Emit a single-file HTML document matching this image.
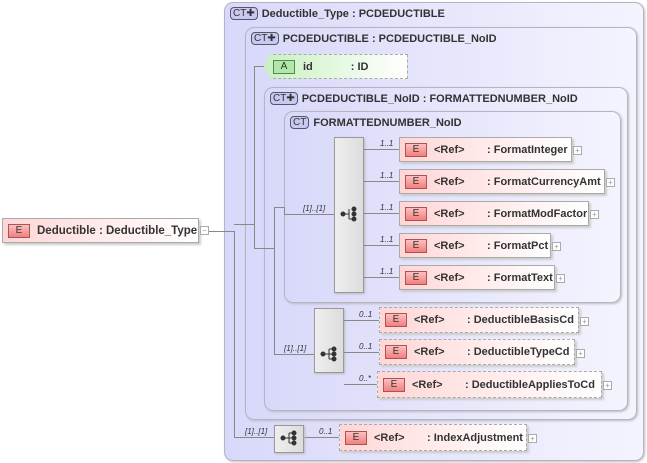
<!DOCTYPE html>
<html><head><meta charset="utf-8"><style>
*{margin:0;padding:0;box-sizing:border-box}
body{width:647px;height:463px;background:#fff;position:relative;overflow:hidden;font-family:"Liberation Sans",sans-serif;font-size:11px;color:#333;font-weight:bold}
.ct{position:absolute;border:1px solid #b4b4c4;border-radius:9px;background:linear-gradient(90deg,#d8d8fa,#f4f4fe);box-shadow:1px 1px 2px #bbb}
.hd{position:absolute;left:5px;top:4px;white-space:nowrap;line-height:14px}
.tag{display:inline-block;border:1px solid #556;border-radius:4px;background:#c8c8f0;font-size:10px;font-weight:normal;padding:0 2px;line-height:11px;margin-right:4px;vertical-align:1px}
.el{position:absolute;height:25px;border:1px solid #aaa;background:linear-gradient(90deg,#ffd6d6,#fff);box-shadow:2px 2px 2px #ccc;white-space:nowrap;padding-left:5px;display:flex;align-items:center}
.el.d{border:1px dashed #aaa}
.E{display:inline-block;flex:none;width:22px;height:14px;border:1px solid #a55;background:linear-gradient(#ffc0c0,#f08080);font-size:10px;font-weight:normal;text-align:center;line-height:12px;margin-right:7px;color:#333}
.r{display:inline-block;width:53px}
.pl{position:absolute;width:9px;height:9px;border:1px solid #aaa;background:#fff;font-size:8px;line-height:7px;text-align:center;color:#999;font-weight:normal}
.seq{position:absolute;border:1px solid #999;background:linear-gradient(90deg,#eee,#ddd);box-shadow:1px 1px 2px #bbb}
.h{position:absolute;height:1px;background:#888}
.v{position:absolute;width:1px;background:#888}
.m{position:absolute;font-size:8px;font-style:italic;font-weight:normal;color:#333}
</style></head><body>

<div class="ct" style="left:224px;top:2px;width:420px;height:459px"><div class="hd"><span class="tag">CT✚</span>Deductible_Type : PCDEDUCTIBLE</div></div>
<div class="ct" style="left:245px;top:27px;width:392px;height:393px"><div class="hd"><span class="tag">CT✚</span>PCDEDUCTIBLE : PCDEDUCTIBLE_NoID</div></div>
<div class="ct" style="left:264px;top:87px;width:364px;height:324px"><div class="hd"><span class="tag">CT✚</span>PCDEDUCTIBLE_NoID : FORMATTEDNUMBER_NoID</div></div>
<div class="ct" style="left:284px;top:111px;width:337px;height:192px"><div class="hd"><span class="tag">CT</span>FORMATTEDNUMBER_NoID</div></div>

<div style="position:absolute;left:263px;top:54px;width:145px;height:25px;border:1px dashed #aaa;border-left:none;background:linear-gradient(90deg,#c8f0c0,#fff);padding-left:10px;display:flex;align-items:center;white-space:nowrap;clip-path:polygon(8px 0,100% 0,100% 100%,8px 100%,0 50%)"><span style="display:inline-block;width:22px;height:14px;border:1px solid #585;background:#b0e8a8;font-size:10px;font-weight:normal;text-align:center;line-height:12px;margin-right:8px">A</span>id<span style="margin-left:38px">: ID</span></div>

<!-- lines -->
<div class="h" style="left:208px;top:231px;width:26px"></div>
<div class="v" style="left:234px;top:231px;height:207px"></div>
<div class="h" style="left:234px;top:437px;width:40px"></div>
<div class="h" style="left:234px;top:224px;width:20px"></div>
<div class="v" style="left:254px;top:66px;height:183px"></div>
<div class="h" style="left:254px;top:66px;width:10px"></div>
<div class="h" style="left:254px;top:248px;width:20px"></div>
<div class="v" style="left:274px;top:207px;height:148px"></div>
<div class="h" style="left:274px;top:207px;width:10px"></div>
<div class="h" style="left:284px;top:214px;width:50px"></div>
<div class="v" style="left:284px;top:207px;height:8px"></div>
<div class="h" style="left:274px;top:354px;width:40px"></div>
<div class="h" style="left:303px;top:437px;width:36px"></div>
<div class="m" style="left:303px;top:204px">[1]..[1]</div>
<div class="m" style="left:284px;top:344px">[1]..[1]</div>
<div class="m" style="left:245px;top:427px">[1]..[1]</div>

<div class="seq" style="left:334px;top:137px;width:30px;height:156px"></div>
<div class="seq" style="left:314px;top:308px;width:30px;height:65px"></div>
<div class="seq" style="left:274px;top:425px;width:30px;height:28px"></div>
<svg style="position:absolute;left:340px;top:206px" width="18" height="16"><g fill="#333" stroke="#333"><circle cx="3" cy="8" r="2"/><line x1="3" y1="8" x2="9" y2="8"/><line x1="9" y1="3" x2="9" y2="13"/><line x1="9" y1="13" x2="14" y2="13"/><circle cx="14" cy="3" r="2"/><circle cx="14" cy="8" r="2"/><circle cx="14" cy="13" r="2"/></g></svg>
<svg style="position:absolute;left:320px;top:346px" width="18" height="16"><g fill="#333" stroke="#333"><circle cx="3" cy="8" r="2"/><line x1="3" y1="8" x2="14" y2="8"/><line x1="9" y1="3" x2="9" y2="13"/><line x1="9" y1="3" x2="14" y2="3"/><line x1="9" y1="13" x2="14" y2="13"/><circle cx="14" cy="3" r="2"/><circle cx="14" cy="8" r="2"/><circle cx="14" cy="13" r="2"/></g></svg>
<svg style="position:absolute;left:280px;top:430px" width="18" height="16"><g fill="#333" stroke="#333"><circle cx="3" cy="8" r="2"/><line x1="3" y1="8" x2="14" y2="8"/><line x1="9" y1="3" x2="9" y2="13"/><line x1="9" y1="3" x2="14" y2="3"/><line x1="9" y1="13" x2="14" y2="13"/><circle cx="14" cy="3" r="2"/><circle cx="14" cy="8" r="2"/><circle cx="14" cy="13" r="2"/></g></svg>

<!-- seq1 children -->
<div class="h" style="left:364px;top:149px;width:35px"></div><div class="m" style="left:380px;top:139px">1..1</div>
<div class="h" style="left:364px;top:181px;width:35px"></div><div class="m" style="left:380px;top:171px">1..1</div>
<div class="h" style="left:364px;top:213px;width:35px"></div><div class="m" style="left:380px;top:203px">1..1</div>
<div class="h" style="left:364px;top:245px;width:35px"></div><div class="m" style="left:380px;top:235px">1..1</div>
<div class="h" style="left:364px;top:277px;width:35px"></div><div class="m" style="left:380px;top:267px">1..1</div>
<div class="el" style="left:399px;top:137px;width:173px"><span class="E">E</span><span class="r">&lt;Ref&gt;</span>: FormatInteger</div><div class="pl" style="left:573px;top:146px">+</div>
<div class="el" style="left:399px;top:169px;width:206px"><span class="E">E</span><span class="r">&lt;Ref&gt;</span>: FormatCurrencyAmt</div><div class="pl" style="left:606px;top:178px">+</div>
<div class="el" style="left:399px;top:201px;width:190px"><span class="E">E</span><span class="r">&lt;Ref&gt;</span>: FormatModFactor</div><div class="pl" style="left:590px;top:210px">+</div>
<div class="el" style="left:399px;top:233px;width:152px"><span class="E">E</span><span class="r">&lt;Ref&gt;</span>: FormatPct</div><div class="pl" style="left:552px;top:242px">+</div>
<div class="el" style="left:399px;top:265px;width:156px"><span class="E">E</span><span class="r">&lt;Ref&gt;</span>: FormatText</div><div class="pl" style="left:556px;top:274px">+</div>

<!-- seq2 children -->
<div class="h" style="left:344px;top:320px;width:35px"></div><div class="m" style="left:359px;top:310px">0..1</div>
<div class="h" style="left:344px;top:352px;width:35px"></div><div class="m" style="left:359px;top:342px">0..1</div>
<div class="h" style="left:344px;top:384px;width:33px"></div><div class="m" style="left:359px;top:374px">0..*</div>
<div class="el d" style="left:379px;top:307px;width:200px;height:26px"><span class="E">E</span><span class="r">&lt;Ref&gt;</span>: DeductibleBasisCd</div><div class="pl" style="left:580px;top:317px">+</div>
<div class="el d" style="left:379px;top:339px;width:196px;height:26px"><span class="E">E</span><span class="r">&lt;Ref&gt;</span>: DeductibleTypeCd</div><div class="pl" style="left:576px;top:349px">+</div>
<div class="el d" style="left:377px;top:371px;width:225px;height:27px"><span class="E">E</span><span class="r">&lt;Ref&gt;</span>: DeductibleAppliesToCd</div><div class="pl" style="left:603px;top:381px">+</div>

<div class="m" style="left:319px;top:427px">0..1</div>
<div class="el d" style="left:339px;top:424px;width:188px;height:27px"><span class="E">E</span><span class="r">&lt;Ref&gt;</span>: IndexAdjustment</div><div class="pl" style="left:528px;top:434px">+</div>

<div class="el" style="left:2px;top:218px;width:197px;font-size:11.5px"><span class="E">E</span>Deductible : Deductible_Type</div>
<div class="pl" style="left:200px;top:226px">−</div>
</body></html>
